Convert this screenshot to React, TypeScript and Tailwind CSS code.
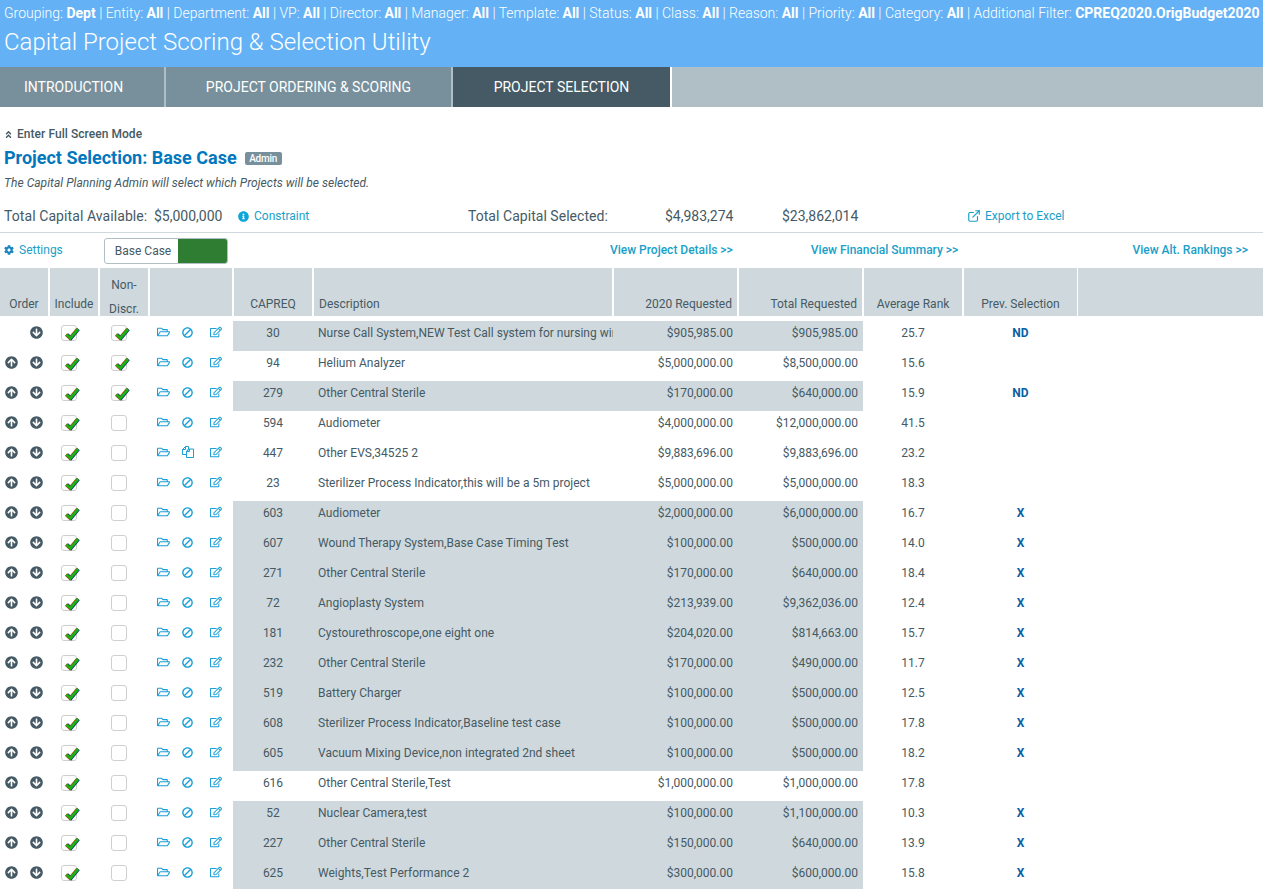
import {
  FaAngleDoubleUp,
  FaArrowCircleDown,
  FaArrowCircleUp,
  FaBan,
  FaCog,
  FaInfoCircle,
  FaRegEdit,
  FaRegFolderOpen,
} from "react-icons/fa";
import { ExternalLink } from "lucide-react";

const filters = [
  ["Grouping", "Dept"],
  ["Entity", "All"],
  ["Department", "All"],
  ["VP", "All"],
  ["Director", "All"],
  ["Manager", "All"],
  ["Template", "All"],
  ["Status", "All"],
  ["Class", "All"],
  ["Reason", "All"],
  ["Priority", "All"],
  ["Category", "All"],
  ["Additional Filter", "CPREQ2020.OrigBudget2020"],
];

type Row = {
  id: string;
  desc: string;
  req: string;
  total: string;
  rank: string;
  prev?: string;
  nd?: boolean;
  shaded?: boolean;
  copy?: boolean;
};

const rows: Row[] = [
  { id: "30", desc: "Nurse Call System,NEW Test Call system for nursing wing", req: "$905,985.00", total: "$905,985.00", rank: "25.7", prev: "ND", nd: true, shaded: true },
  { id: "94", desc: "Helium Analyzer", req: "$5,000,000.00", total: "$8,500,000.00", rank: "15.6", nd: true },
  { id: "279", desc: "Other Central Sterile", req: "$170,000.00", total: "$640,000.00", rank: "15.9", prev: "ND", nd: true, shaded: true },
  { id: "594", desc: "Audiometer", req: "$4,000,000.00", total: "$12,000,000.00", rank: "41.5" },
  { id: "447", desc: "Other EVS,34525 2", req: "$9,883,696.00", total: "$9,883,696.00", rank: "23.2", copy: true },
  { id: "23", desc: "Sterilizer Process Indicator,this will be a 5m project", req: "$5,000,000.00", total: "$5,000,000.00", rank: "18.3" },
  { id: "603", desc: "Audiometer", req: "$2,000,000.00", total: "$6,000,000.00", rank: "16.7", prev: "X", shaded: true },
  { id: "607", desc: "Wound Therapy System,Base Case Timing Test", req: "$100,000.00", total: "$500,000.00", rank: "14.0", prev: "X", shaded: true },
  { id: "271", desc: "Other Central Sterile", req: "$170,000.00", total: "$640,000.00", rank: "18.4", prev: "X", shaded: true },
  { id: "72", desc: "Angioplasty System", req: "$213,939.00", total: "$9,362,036.00", rank: "12.4", prev: "X", shaded: true },
  { id: "181", desc: "Cystourethroscope,one eight one", req: "$204,020.00", total: "$814,663.00", rank: "15.7", prev: "X", shaded: true },
  { id: "232", desc: "Other Central Sterile", req: "$170,000.00", total: "$490,000.00", rank: "11.7", prev: "X", shaded: true },
  { id: "519", desc: "Battery Charger", req: "$100,000.00", total: "$500,000.00", rank: "12.5", prev: "X", shaded: true },
  { id: "608", desc: "Sterilizer Process Indicator,Baseline test case", req: "$100,000.00", total: "$500,000.00", rank: "17.8", prev: "X", shaded: true },
  { id: "605", desc: "Vacuum Mixing Device,non integrated 2nd sheet", req: "$100,000.00", total: "$500,000.00", rank: "18.2", prev: "X", shaded: true },
  { id: "616", desc: "Other Central Sterile,Test", req: "$1,000,000.00", total: "$1,000,000.00", rank: "17.8" },
  { id: "52", desc: "Nuclear Camera,test", req: "$100,000.00", total: "$1,100,000.00", rank: "10.3", prev: "X", shaded: true },
  { id: "227", desc: "Other Central Sterile", req: "$150,000.00", total: "$640,000.00", rank: "13.9", prev: "X", shaded: true },
  { id: "625", desc: "Weights,Test Performance 2", req: "$300,000.00", total: "$600,000.00", rank: "15.8", prev: "X", shaded: true },
];

function Check({ checked }: { checked?: boolean }) {
  return (
    <div className="relative w-4 h-4 rounded-[3px] border border-[#cfcfcf] bg-white">
      {checked && (
        <svg className="absolute left-[2px] -top-[1px] w-[18px] h-[18px]" viewBox="0 0 18 18" fill="none">
          <polyline points="2,9.6 6,13.2 13.5,4.2" stroke="#c0640a" strokeWidth="3.4" />
          <polyline points="3,9.6 7,13.2 14.5,4.2" stroke="#16407a" strokeWidth="3.4" />
          <polyline points="2.5,9.6 6.5,13.2 14,4.2" stroke="#1db30f" strokeWidth="2.6" />
        </svg>
      )}
    </div>
  );
}

function FilesIcon() {
  return (
    <svg className="w-3 h-3" viewBox="0 0 12 12" fill="none" stroke="currentColor" strokeWidth="1">
      <path d="M3.5 .5h3v2.5L4.5 5.5v3h-4V3.5z" />
      <path d="M7.5 3h4v8.5h-7v-6z" />
      <path d="M3.5 .5v3h-3M7.5 3v2.5h-3" />
    </svg>
  );
}

function HeadCell({ children, className = "" }: { children?: React.ReactNode; className?: string }) {
  return <div className={`bg-[#cfd8dc] flex flex-col justify-end leading-[24px] ${className}`}>{children}</div>;
}

export default function App() {
  return (
    <div className="h-screen overflow-hidden bg-white text-[#455a64] text-[13px] font-['Roboto',sans-serif]">
      {/* Header */}
      <header className="h-[67px] bg-[#64b2f5] text-white px-[4px]">
        <p className="pt-[4px] text-[14px] leading-[18px] font-light whitespace-nowrap">
          {filters.map(([k, v], i) => (
            <span key={k}>
              {i > 0 && " | "}
              {k}: <b className="font-bold">{v}</b>
            </span>
          ))}
        </p>
        <h1 className="mt-[4px] text-[24px] leading-[32px] font-light whitespace-nowrap">Capital Project Scoring &amp; Selection Utility</h1>
      </header>

      {/* Tabs */}
      <nav className="flex h-10 bg-[#b0bec5] text-[14px] text-white">
        <div className="w-[164px] mr-[2px] bg-[#78909c] flex items-center pl-[24px]">INTRODUCTION</div>
        <div className="w-[285px] mr-[2px] bg-[#78909c] flex items-center justify-center">PROJECT ORDERING &amp; SCORING</div>
        <div className="w-[217px] bg-[#455a64] flex items-center justify-center border-r-2 border-white box-content">PROJECT SELECTION</div>
      </nav>

      {/* Title area */}
      <div className="px-1 pt-[19px]">
        <div className="flex items-center gap-[4px] text-[12px] font-medium leading-[16px] tracking-[0.05px]">
          <FaAngleDoubleUp className="w-[9px] h-[9px]" />
          <span>Enter Full Screen Mode</span>
        </div>
        <div className="flex items-center mt-[4px] h-[24px]">
          <h2 className="text-[18px] leading-[24px] font-bold text-[#0277bd]">Project Selection: Base Case</h2>
          <span className="ml-[8px] w-[37px] h-[13px] bg-[#78909c] text-white text-[10px] leading-[13px] font-medium rounded-[2px] text-center tracking-[-0.2px]">Admin</span>
        </div>
        <p className="mt-[5px] text-[12px] leading-[16px] italic tracking-[0.04px]">The Capital Planning Admin will select which Projects will be selected.</p>
      </div>

      {/* Totals */}
      <div className="flex items-center h-[24px] mt-[13px] px-1 text-[14px] whitespace-nowrap">
        <span className="w-[150px] tracking-[0.08px]">Total Capital Available:</span>
        <span className="w-[84px]">$5,000,000</span>
        <FaInfoCircle className="w-[11px] h-[11px] text-[#0ea5d8]" />
        <span className="ml-[5px] w-[214px] text-[12px] text-[#1a9fc9]">Constraint</span>
        <span className="w-[197px] tracking-[0.04px]">Total Capital Selected:</span>
        <span className="w-[117px]">$4,983,274</span>
        <span className="w-[185px]">$23,862,014</span>
        <ExternalLink className="w-[14px] h-[14px] text-[#1a9fc9]" />
        <span className="ml-[4px] text-[12px] text-[#1a9fc9]">Export to Excel</span>
      </div>

      {/* Controls */}
      <div className="flex items-center h-[35px] mt-[4px] border-t border-[#cfd8dc] px-1 text-[12px] text-[#1a9fc9] whitespace-nowrap">
        <FaCog className="w-[10px] h-[10px] text-[#1a86c0]" />
        <span className="ml-[5px] w-[85px]">Settings</span>
        <div className="flex w-[124px] h-[26px] mt-[1px] rounded-[3px] border border-[#b0bec5] overflow-hidden">
          <span className="w-[73px] flex items-center justify-center text-[#455a64] pl-[3px]">Base Case</span>
          <span className="flex-1 bg-[#2e7d32]" />
        </div>
        <span className="ml-[382px] font-medium">View Project Details &gt;&gt;</span>
        <span className="ml-[78px] font-medium">View Financial Summary &gt;&gt;</span>
        <span className="ml-auto mr-[11px] font-medium">View Alt. Rankings &gt;&gt;</span>
      </div>

      {/* Table */}
      <div className="grid grid-cols-[50px_50px_50px_84px_80px_300px_125px_125px_100px_114px_1fr] grid-rows-[48px] h-[48px] mt-[1px] text-[12px] whitespace-nowrap [&>*]:mr-[2px] [&>*:last-child]:mr-0">
        <HeadCell className="text-center">Order</HeadCell>
        <HeadCell className="text-center">Include</HeadCell>
        <HeadCell className="text-center">
          <div className="flex flex-col -mb-[5px]">
            <span>Non-</span>
            <span>Discr.</span>
          </div>
        </HeadCell>
        <HeadCell />
        <HeadCell className="text-center">CAPREQ</HeadCell>
        <HeadCell className="pl-[5px]">Description</HeadCell>
        <HeadCell className="text-right pr-[5px]">2020 Requested</HeadCell>
        <HeadCell className="text-right pr-[5px]">Total Requested</HeadCell>
        <HeadCell className="text-center">Average Rank</HeadCell>
        <HeadCell className="text-center !mr-[1px]">Prev. Selection</HeadCell>
        <HeadCell />
      </div>
      <div className="mt-[5px] text-[12px]">
        {rows.map((r, i) => (
          <div key={r.id} className="grid grid-cols-[50px_50px_50px_83px_80px_300px_125px_125px_100px_115px_1fr] h-[30px] whitespace-nowrap">
            <div className="flex pt-[5px] pl-[5px] gap-[12px] text-[#455a64]">
              {i > 0 ? <FaArrowCircleUp className="w-[13px] h-[13px]" /> : <span className="w-[13px]" />}
              <FaArrowCircleDown className="w-[13px] h-[13px]" />
            </div>
            <div className="pl-[11px] pt-[4px]"><Check checked /></div>
            <div className="pl-[11px] pt-[4px]"><Check checked={r.nd} /></div>
            <div className="flex pt-[5px] pl-[7px] text-[#1a9fd8]">
              <FaRegFolderOpen className="w-[13px] h-[12px]" />
              <span className="ml-[12px] w-[11px]">
                {r.copy ? <FilesIcon /> : <FaBan className="w-[11px] h-[11px] -scale-x-100 mt-[1px]" />}
              </span>
              <FaRegEdit className="ml-[17px] w-[12px] h-[12px]" />
            </div>
            <div className={`col-span-4 grid grid-cols-[80px_300px_125px_125px] leading-[24px] ${r.shaded ? "bg-[#cfd8dc]" : ""}`}>
              <span className="text-center">{r.id}</span>
              <span className="pl-[5px] overflow-hidden tracking-[0.02px]">{r.desc}</span>
              <span className="text-right pr-[5px]">{r.req}</span>
              <span className="text-right pr-[5px]">{r.total}</span>
            </div>
            <span className="text-center leading-[24px]">{r.rank}</span>
            <span className="text-center leading-[24px] font-bold text-[#0b5fa5]">{r.prev}</span>
          </div>
        ))}
      </div>
    </div>
  );
}
